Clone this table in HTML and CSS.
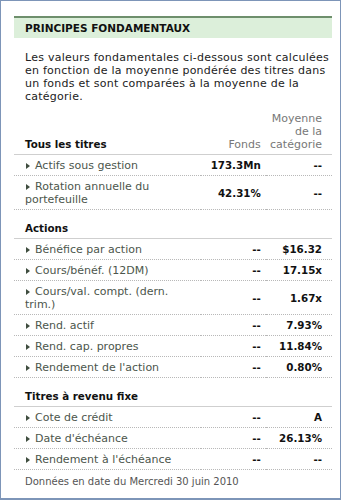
FILE: index.html
```html
<!DOCTYPE html>
<html lang="fr">
<head>
<meta charset="utf-8">
<link rel="stylesheet" href="styles.css">
</head>
<body>
<div class="frame">
  <div class="panel">
    <h2 class="title">PRINCIPES FONDAMENTAUX</h2>
    <p class="intro">Les valeurs fondamentales ci-dessous sont calculées en fonction de la moyenne pondérée des titres dans un fonds et sont comparées à la moyenne de la catégorie.</p>
    <table class="data">
      <colgroup><col class="c-label"><col class="c-fund"><col class="c-cat"></colgroup>
      <thead>
        <tr class="colhead">
          <th class="sec">Tous les titres</th>
          <th class="num hd">Fonds</th>
          <th class="num hd">Moyenne de la catégorie</th>
        </tr>
      </thead>
      <tbody>
        <tr><td class="lbl"><span class="tri"></span>Actifs sous gestion</td><td class="num b">173.3Mn</td><td class="num b">--</td></tr>
        <tr><td class="lbl"><span class="tri"></span>Rotation annuelle du portefeuille</td><td class="num b">42.31%</td><td class="num b">--</td></tr>
        <tr class="sechead"><th class="sec" colspan="3">Actions</th></tr>
        <tr><td class="lbl"><span class="tri"></span>Bénéfice par action</td><td class="num b">--</td><td class="num b">$16.32</td></tr>
        <tr><td class="lbl"><span class="tri"></span>Cours/bénéf. (12DM)</td><td class="num b">--</td><td class="num b">17.15x</td></tr>
        <tr><td class="lbl"><span class="tri"></span>Cours/val. compt. (dern. trim.)</td><td class="num b">--</td><td class="num b">1.67x</td></tr>
        <tr><td class="lbl"><span class="tri"></span>Rend. actif</td><td class="num b">--</td><td class="num b">7.93%</td></tr>
        <tr><td class="lbl"><span class="tri"></span>Rend. cap. propres</td><td class="num b">--</td><td class="num b">11.84%</td></tr>
        <tr><td class="lbl"><span class="tri"></span>Rendement de l'action</td><td class="num b">--</td><td class="num b">0.80%</td></tr>
        <tr class="sechead"><th class="sec" colspan="3">Titres à revenu fixe</th></tr>
        <tr><td class="lbl"><span class="tri"></span>Cote de crédit</td><td class="num b">--</td><td class="num b">A</td></tr>
        <tr><td class="lbl"><span class="tri"></span>Date d'échéance</td><td class="num b">--</td><td class="num b">26.13%</td></tr>
        <tr><td class="lbl"><span class="tri"></span>Rendement à l'échéance</td><td class="num b">--</td><td class="num b">--</td></tr>
      </tbody>
    </table>
    <p class="foot">Données en date du Mercredi 30 juin 2010</p>
  </div>
</div>
</body>
</html>
```
FILE: styles.css
```css
html, body {
  margin: 0;
  padding: 0;
  background: #ffffff;
}
body {
  font-family: "DejaVu Sans", Verdana, sans-serif;
  font-size: 11px;
  line-height: 13px;
  color: #111;
}
.frame {
  width: 341px;
  height: 500px;
  box-sizing: border-box;
  border: 1px solid #7d95b8;
  border-bottom-width: 2px;
  padding: 15px 8px 0 13px;
  overflow: hidden;
}
.title {
  margin: 0;
  border-top: 2px solid #6e8f6c;
  background: #dcefda;
  font-size: 10.5px;
  line-height: 13px;
  font-weight: bold;
  color: #111;
  padding: 4px 11px 3px;
}
.intro {
  margin: 0;
  padding: 13px 0 0 11px;
  letter-spacing: 0.25px;
  color: #222;
}
.data {
  width: 100%;
  border-collapse: collapse;
  table-layout: fixed;
}
.c-label { width: 186px; }
.c-fund { width: 65px; }
.c-cat { width: 66px; }
.data th, .data td {
  padding: 4px 0 3px;
  line-height: 13px;
  vertical-align: bottom;
  font-weight: normal;
  text-align: left;
}
.colhead th {
  padding-top: 9px;
  padding-bottom: 3px;
  border-bottom: 1px solid #cfcfcf;
}
.data th.sec {
  font-weight: bold;
  font-size: 10.3px;
  color: #111;
  padding-left: 11px;
}
.data th.hd {
  color: #777;
}
.sechead th {
  padding-top: 12px;
  padding-bottom: 3px;
  border-bottom: 1px solid #cfcfcf;
}
.data td {
  border-bottom: 1px dotted #b8b8b8;
  vertical-align: middle;
}
.data td.lbl {
  padding-left: 11px;
  padding-right: 14px;
  color: #4c564c;
}
.data .num {
  text-align: right;
}
.data td.num:nth-child(2), .data th.num:nth-child(2) {
  padding-right: 5px;
}
.data td.num:nth-child(3), .data th.num:nth-child(3) {
  padding-right: 10px;
}
.data td.b {
  font-weight: bold;
  font-size: 10.3px;
  color: #111;
}
.tri {
  display: inline-block;
  width: 0;
  height: 0;
  border-top: 3.5px solid transparent;
  border-bottom: 3.5px solid transparent;
  border-left: 4px solid #3f4d3f;
  margin: 0 5px 0 1px;
  vertical-align: 0px;
}
.foot {
  margin: 0;
  padding: 5px 11px 0;
  font-size: 10px;
  color: #555;
}
```
